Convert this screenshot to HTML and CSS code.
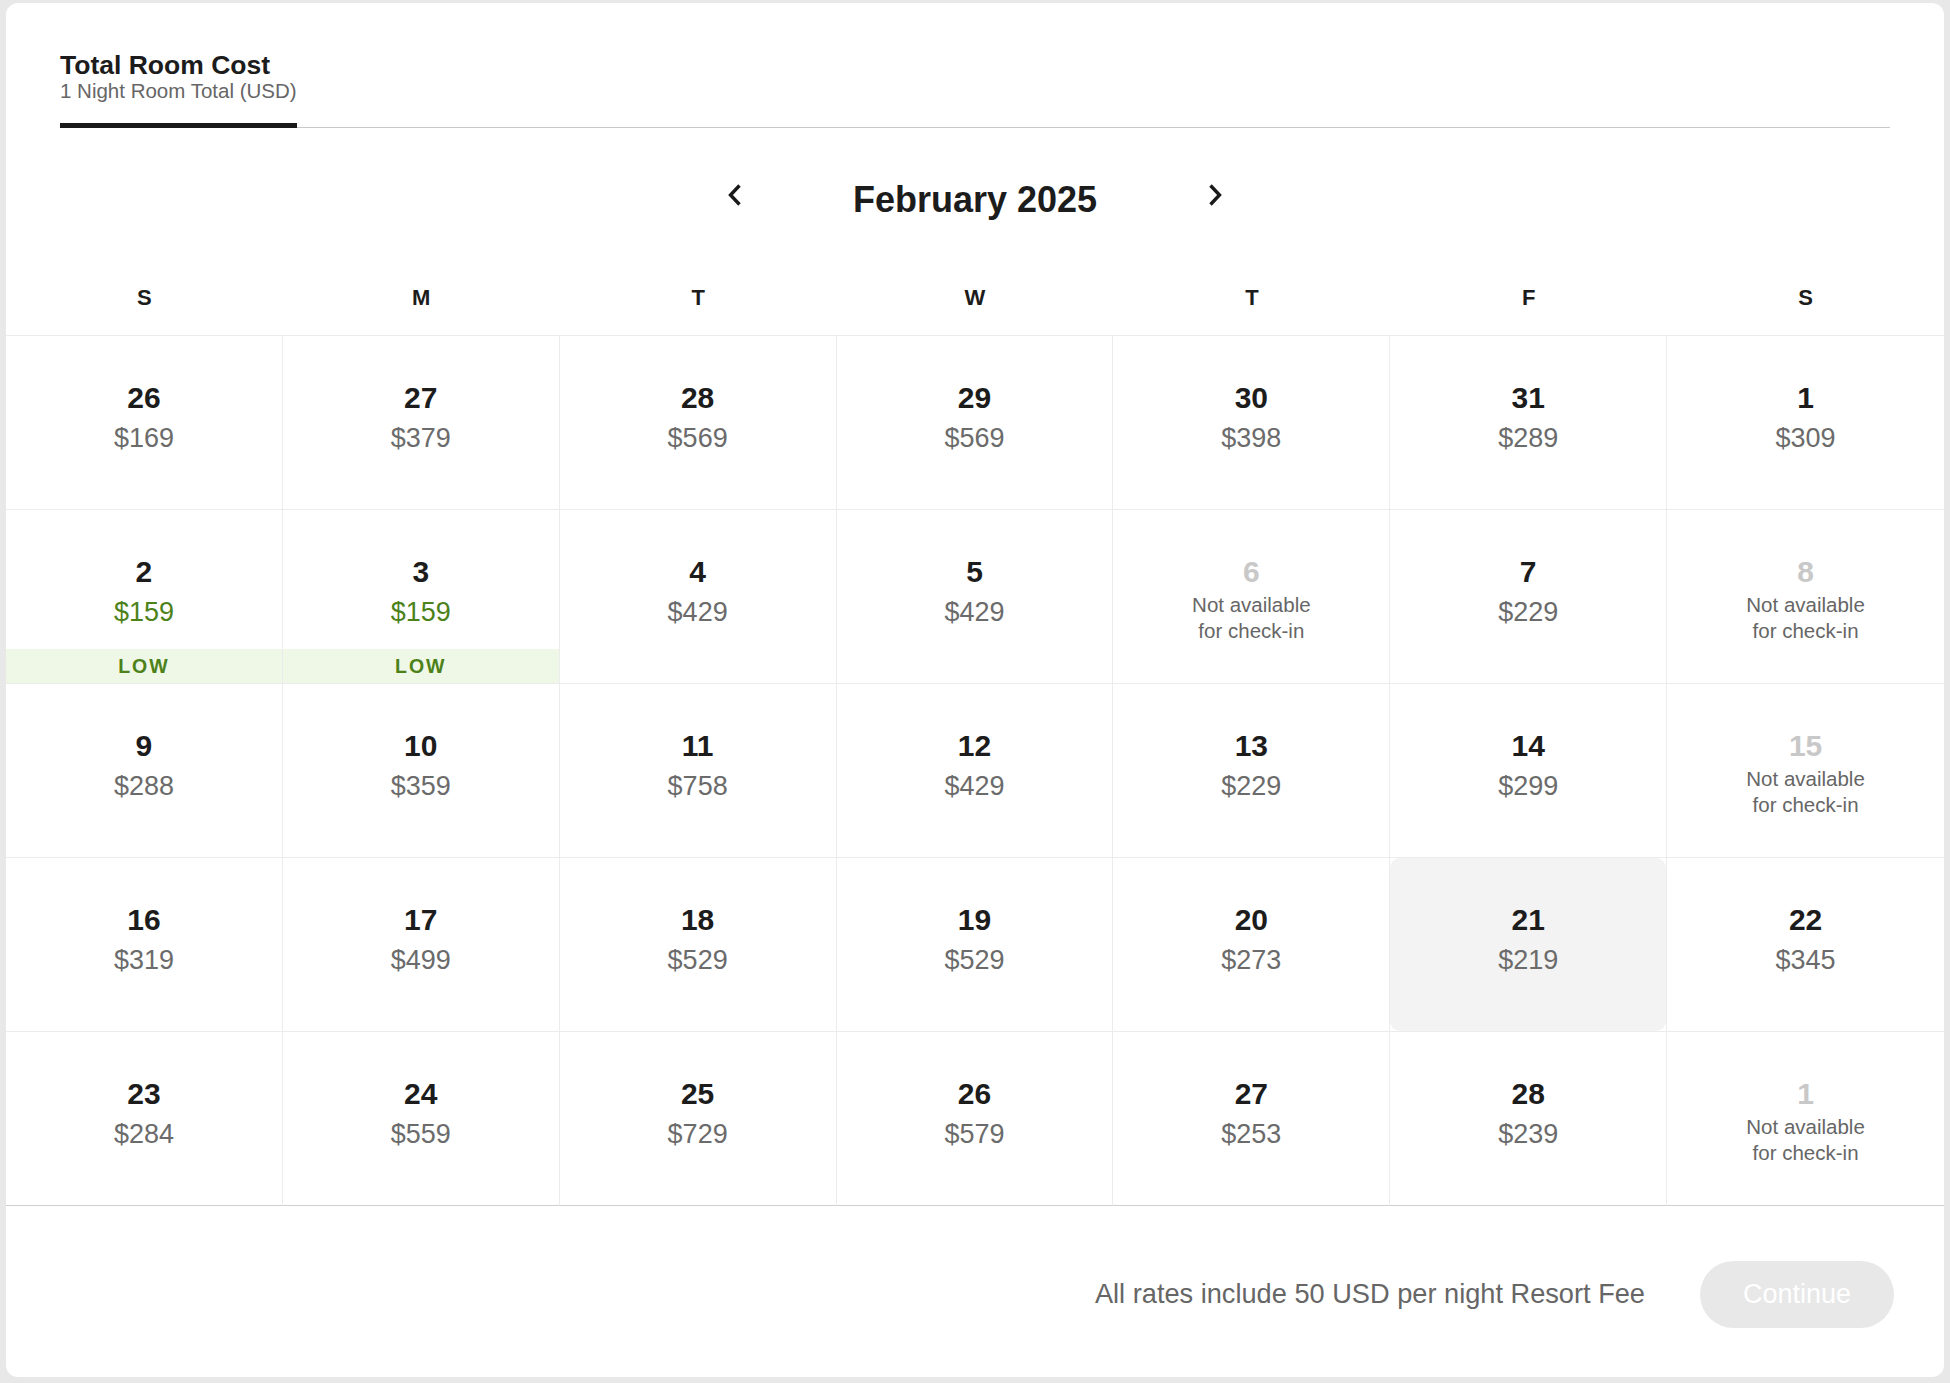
FILE: index.html
```html
<!DOCTYPE html>
<html lang="en">
<head>
<meta charset="utf-8">
<title>Total Room Cost</title>
<link rel="stylesheet" href="styles.css">
</head>
<body>
<div class="card">
  <div class="tabs">
    <div class="tab">
      <div class="tab-title">Total Room Cost</div>
      <div class="tab-sub">1 Night Room Total (USD)</div>
    </div>
  </div>

  <div class="month-nav">
    <button class="nav-btn" aria-label="Previous month">
      <svg width="16" height="24" viewBox="0 0 16 24"><polyline points="12.5,2.5 3.5,12 12.5,21.5" fill="none" stroke="#1a1a1a" stroke-width="3.4" stroke-linejoin="miter"/></svg>
    </button>
    <div class="month-title">February 2025</div>
    <button class="nav-btn" aria-label="Next month">
      <svg width="16" height="24" viewBox="0 0 16 24"><polyline points="3.5,2.5 12.5,12 3.5,21.5" fill="none" stroke="#1a1a1a" stroke-width="3.4" stroke-linejoin="miter"/></svg>
    </button>
  </div>

  <div class="weekdays">
    <div>S</div><div>M</div><div>T</div><div>W</div><div>T</div><div>F</div><div>S</div>
  </div>

  <div class="grid">
    <div class="cell"><div class="cell-body"><div class="num">26</div><div class="price">$169</div></div></div>
    <div class="cell"><div class="cell-body"><div class="num">27</div><div class="price">$379</div></div></div>
    <div class="cell"><div class="cell-body"><div class="num">28</div><div class="price">$569</div></div></div>
    <div class="cell"><div class="cell-body"><div class="num">29</div><div class="price">$569</div></div></div>
    <div class="cell"><div class="cell-body"><div class="num">30</div><div class="price">$398</div></div></div>
    <div class="cell"><div class="cell-body"><div class="num">31</div><div class="price">$289</div></div></div>
    <div class="cell"><div class="cell-body"><div class="num">1</div><div class="price">$309</div></div></div>

    <div class="cell"><div class="cell-body"><div class="num">2</div><div class="price low">$159</div><div class="low-band">LOW</div></div></div>
    <div class="cell"><div class="cell-body"><div class="num">3</div><div class="price low">$159</div><div class="low-band">LOW</div></div></div>
    <div class="cell"><div class="cell-body"><div class="num">4</div><div class="price">$429</div></div></div>
    <div class="cell"><div class="cell-body"><div class="num">5</div><div class="price">$429</div></div></div>
    <div class="cell"><div class="cell-body"><div class="num na">6</div><div class="na-text">Not available<br>for check-in</div></div></div>
    <div class="cell"><div class="cell-body"><div class="num">7</div><div class="price">$229</div></div></div>
    <div class="cell"><div class="cell-body"><div class="num na">8</div><div class="na-text">Not available<br>for check-in</div></div></div>

    <div class="cell"><div class="cell-body"><div class="num">9</div><div class="price">$288</div></div></div>
    <div class="cell"><div class="cell-body"><div class="num">10</div><div class="price">$359</div></div></div>
    <div class="cell"><div class="cell-body"><div class="num">11</div><div class="price">$758</div></div></div>
    <div class="cell"><div class="cell-body"><div class="num">12</div><div class="price">$429</div></div></div>
    <div class="cell"><div class="cell-body"><div class="num">13</div><div class="price">$229</div></div></div>
    <div class="cell"><div class="cell-body"><div class="num">14</div><div class="price">$299</div></div></div>
    <div class="cell"><div class="cell-body"><div class="num na">15</div><div class="na-text">Not available<br>for check-in</div></div></div>

    <div class="cell"><div class="cell-body"><div class="num">16</div><div class="price">$319</div></div></div>
    <div class="cell"><div class="cell-body"><div class="num">17</div><div class="price">$499</div></div></div>
    <div class="cell"><div class="cell-body"><div class="num">18</div><div class="price">$529</div></div></div>
    <div class="cell"><div class="cell-body"><div class="num">19</div><div class="price">$529</div></div></div>
    <div class="cell"><div class="cell-body"><div class="num">20</div><div class="price">$273</div></div></div>
    <div class="cell"><div class="cell-body selected"><div class="num">21</div><div class="price">$219</div></div></div>
    <div class="cell"><div class="cell-body"><div class="num">22</div><div class="price">$345</div></div></div>

    <div class="cell"><div class="cell-body"><div class="num">23</div><div class="price">$284</div></div></div>
    <div class="cell"><div class="cell-body"><div class="num">24</div><div class="price">$559</div></div></div>
    <div class="cell"><div class="cell-body"><div class="num">25</div><div class="price">$729</div></div></div>
    <div class="cell"><div class="cell-body"><div class="num">26</div><div class="price">$579</div></div></div>
    <div class="cell"><div class="cell-body"><div class="num">27</div><div class="price">$253</div></div></div>
    <div class="cell"><div class="cell-body"><div class="num">28</div><div class="price">$239</div></div></div>
    <div class="cell"><div class="cell-body"><div class="num na">1</div><div class="na-text">Not available<br>for check-in</div></div></div>
  </div>

  <div class="footer">
    <div class="fee-note">All rates include 50 USD per night Resort Fee</div>
    <button class="continue-btn">Continue</button>
  </div>
</div>
</body>
</html>
```

FILE: styles.css
```css
* {
  box-sizing: border-box;
}

html, body {
  margin: 0;
  padding: 0;
}

body {
  background: #e8e8e8;
  font-family: "Liberation Sans", Arial, Helvetica, sans-serif;
  color: #1c1c1c;
  padding: 3px 6px 6px 6px;
}

.card {
  background: #ffffff;
  border-radius: 12px;
  padding-top: 48px;
  overflow: hidden;
}

/* Tabs */
.tabs {
  margin: 0 54px;
  border-bottom: 1px solid #c9c9c9;
}

.tab {
  display: inline-block;
  padding-bottom: 20px;
  border-bottom: 5px solid #1a1a1a;
  margin-bottom: -1px;
}

.tab-title {
  font-size: 26.5px;
  line-height: 28px;
  font-weight: 700;
  color: #1c1c1c;
}

.tab-sub {
  font-size: 20.5px;
  line-height: 24px;
  color: #666666;
}

/* Month navigation */
.month-nav {
  margin: 50px auto 0;
  width: 520px;
  height: 44px;
  display: flex;
  justify-content: space-between;
  align-items: flex-start;
}

.nav-btn {
  width: 40px;
  height: 24px;
  margin-top: 5px;
  padding: 0;
  border: 0;
  background: transparent;
  display: flex;
  align-items: center;
  justify-content: center;
}

.month-title {
  font-size: 36px;
  line-height: 44px;
  font-weight: 700;
  color: #1c1c1c;
}

/* Weekday header */
.weekdays {
  margin-top: 62px;
  display: grid;
  grid-template-columns: repeat(7, 1fr);
  border-bottom: 1px solid #ececec;
}

.weekdays div {
  text-align: center;
  font-size: 22px;
  line-height: 26px;
  font-weight: 700;
  padding-top: 1px;
  padding-bottom: 24px;
  color: #1c1c1c;
}

/* Calendar grid */
.grid {
  display: grid;
  grid-template-columns: repeat(7, 1fr);
  grid-auto-rows: 174px;
}

.cell {
  border-right: 1px solid #ececec;
  border-bottom: 1px solid #ececec;
  display: flex;
}

.cell:nth-child(7n) {
  border-right: 0;
}

.cell:nth-last-child(-n+7) {
  border-bottom-color: #cfcfcf;
}

.cell-body {
  flex: 1;
  display: flex;
  flex-direction: column;
  align-items: center;
  padding-top: 44px;
}

.cell-body.selected {
  background: #f3f3f3;
  border-radius: 10px;
}

.num {
  font-size: 30px;
  line-height: 36px;
  font-weight: 700;
  color: #1c1c1c;
}

.num.na {
  color: #c8c8c8;
}

.price {
  margin-top: 2px;
  font-size: 27px;
  line-height: 40px;
  color: #6b6b6b;
}

.price.low {
  color: #4d8119;
}

.na-text {
  margin-top: 2px;
  font-size: 20.5px;
  line-height: 26px;
  color: #666666;
  text-align: center;
}

.low-band {
  margin-top: auto;
  align-self: stretch;
  height: 34px;
  line-height: 34px;
  background: #eff8e6;
  color: #4d8119;
  text-align: center;
  font-size: 19.5px;
  font-weight: 700;
  letter-spacing: 2px;
}

/* Footer */
.footer {
  height: 171px;
  display: flex;
  justify-content: flex-end;
  align-items: center;
  padding-top: 5px;
  padding-right: 50px;
  gap: 55px;
}

.fee-note {
  font-size: 27.2px;
  color: #666666;
}

.continue-btn {
  width: 194px;
  height: 67px;
  border: 0;
  border-radius: 34px;
  background: #e8e8e8;
  color: #ffffff;
  font-family: "Liberation Sans", Arial, Helvetica, sans-serif;
  font-size: 27px;
  padding: 0;
}
```
